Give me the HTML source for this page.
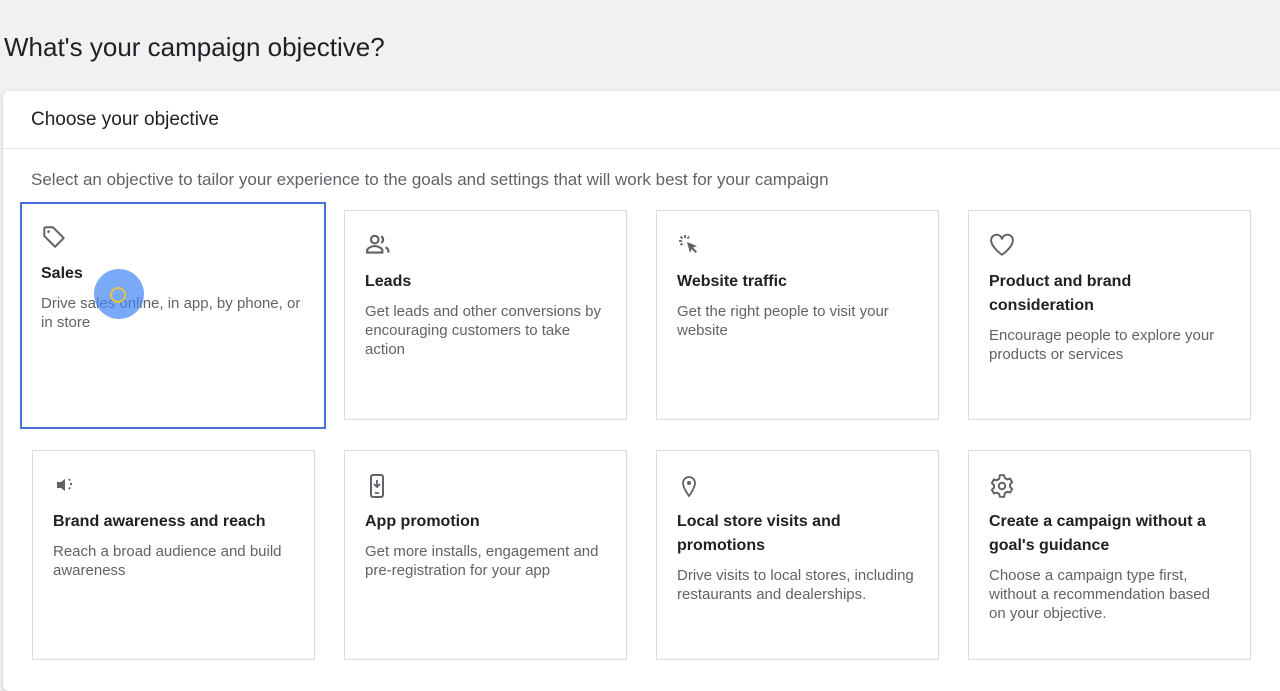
<!DOCTYPE html>
<html><head><style>
body{margin:0;width:1280px;height:669px;overflow:hidden;background:#f1f1f3;font-family:"Liberation Sans",Arial,sans-serif;position:relative}
h1{position:absolute;left:4px;top:32px;margin:0;font-weight:400;font-size:26px;color:#202124}
.panel{position:absolute;left:3px;top:91px;width:1290px;height:600px;background:#fff;border-radius:6px;box-shadow:0 1px 3px rgba(0,0,0,.2)}
.hd{position:absolute;left:31px;top:109px;font-size:19px;color:#202124}
.sep{position:absolute;left:3px;right:0;top:148px;height:1px;background:#e0e0e0}
.sub{position:absolute;left:31px;top:170px;font-size:17px;color:#5f6368}
.c{position:absolute;width:283px;height:210px;border:1px solid #dadce0;background:#fff;box-sizing:border-box}
.c svg{position:absolute;left:20px;top:22px}
.t{position:absolute;left:20px;top:59px;font-size:16px;font-weight:bold;color:#202124;line-height:24px;width:250px}
.d{position:absolute;left:20px;font-size:15px;color:#5f6368;line-height:19px;width:245px}
.sel{border:2px solid #4a70d8}
</style></head><body>
<h1>What's your campaign objective?</h1>
<div class="panel"></div>
<div class="hd">Choose your objective</div>
<div class="sep"></div>
<div class="sub">Select an objective to tailor your experience to the goals and settings that will work best for your campaign</div>

<div class="c sel" style="left:20px;top:202px;width:306px;height:227px">
<svg width="26" height="26" viewBox="0 0 24 24" style="left:19px;top:20px"><path d="M3 4v7l10 10 8-8L11 3H4z" fill="none" stroke="#5f6368" stroke-width="1.8" stroke-linejoin="round"/><circle cx="7" cy="7" r="1.2" fill="#5f6368"/></svg>
<div class="t" style="left:19px;top:58px">Sales</div>
<div class="d" style="left:19px;top:90px;width:265px">Drive sales online, in app, by phone, or in store</div>
<div style="position:absolute;left:72px;top:65px;width:50px;height:50px;border-radius:50%;background:rgba(66,133,244,.7)"></div>
<div style="position:absolute;left:88px;top:83px;width:12px;height:12px;border-radius:50%;border:2px solid #e8c24a"></div>
</div>

<div class="c" style="left:344px;top:210px">
<svg width="26" height="24" viewBox="0 0 24 22"><circle cx="9" cy="6" r="3.5" fill="none" stroke="#5f6368" stroke-width="2"/><path d="M2 18v-2c0-2 4-4 7-4s7 2 7 4v2z" fill="none" stroke="#5f6368" stroke-width="2"/><path d="M15 3a3.5 3.5 0 0 1 0 6M19 13c1.5 1 2.5 2 2.5 3v2" fill="none" stroke="#5f6368" stroke-width="2"/></svg>
<div class="t">Leads</div>
<div class="d" style="top:91px">Get leads and other conversions by encouraging customers to take action</div></div>

<div class="c" style="left:656px;top:210px">
<svg width="24" height="24" viewBox="0 0 24 24"><path d="M10 9l10 4-4 1.5 4 4-1.5 1.5-4-4L13 20z" fill="#5f6368"/><path d="M8 2v3M2 8h3M3.5 3.5l2 2M12 3.5l-1.5 2M3.5 12l2-1.5" stroke="#5f6368" stroke-width="1.8"/></svg>
<div class="t">Website traffic</div>
<div class="d" style="top:91px">Get the right people to visit your website</div></div>

<div class="c" style="left:968px;top:210px">
<svg width="26" height="24" viewBox="0 0 24 22"><path d="M12 20S2 13 2 7a5 5 0 0 1 10-1 5 5 0 0 1 10 1c0 6-10 13-10 13z" fill="none" stroke="#5f6368" stroke-width="1.8"/></svg>
<div class="t">Product and brand consideration</div>
<div class="d" style="top:115px">Encourage people to explore your products or services</div></div>

<div class="c" style="left:32px;top:450px">
<svg width="26" height="24" viewBox="0 0 24 24"><path d="M3 9h4l4-3v12l-4-3H3z" fill="#5f6368"/><path d="M15 6l1 1.5M16 11h2M15 16l1-1.5" stroke="#5f6368" stroke-width="2"/></svg>
<div class="t">Brand awareness and reach</div>
<div class="d" style="top:91px">Reach a broad audience and build awareness</div></div>

<div class="c" style="left:344px;top:450px">
<svg width="24" height="26" viewBox="0 0 24 26"><rect x="6" y="2" width="12" height="22" rx="2" fill="none" stroke="#5f6368" stroke-width="2"/><path d="M12 7v7M9 11l3 3 3-3M10 20h4" stroke="#5f6368" stroke-width="1.8" fill="none"/></svg>
<div class="t">App promotion</div>
<div class="d" style="top:91px">Get more installs, engagement and pre-registration for your app</div></div>

<div class="c" style="left:656px;top:450px">
<svg width="24" height="26" viewBox="0 0 24 26"><path d="M12 23s-6-8-6-13a6 6 0 0 1 12 0c0 5-6 13-6 13z" fill="none" stroke="#5f6368" stroke-width="1.8"/><circle cx="12" cy="10" r="2" fill="#5f6368"/></svg>
<div class="t">Local store visits and promotions</div>
<div class="d" style="top:115px">Drive visits to local stores, including restaurants and dealerships.</div></div>

<div class="c" style="left:968px;top:450px">
<svg width="26" height="26" viewBox="0 0 24 24"><path d="M10 2h4l.6 2.6 2.2 1.3 2.6-.8 2 3.4-2 1.9v2.4l2 1.9-2 3.4-2.6-.8-2.2 1.3L14 22h-4l-.6-2.6-2.2-1.3-2.6.8-2-3.4 2-1.9V11.2l-2-1.9 2-3.4 2.6.8 2.2-1.3z" fill="none" stroke="#5f6368" stroke-width="1.8" stroke-linejoin="round"/><circle cx="12" cy="12" r="3" fill="none" stroke="#5f6368" stroke-width="1.8"/></svg>
<div class="t">Create a campaign without a goal's guidance</div>
<div class="d" style="top:115px;width:235px">Choose a campaign type first, without a recommendation based on your objective.</div></div>
</body></html>
